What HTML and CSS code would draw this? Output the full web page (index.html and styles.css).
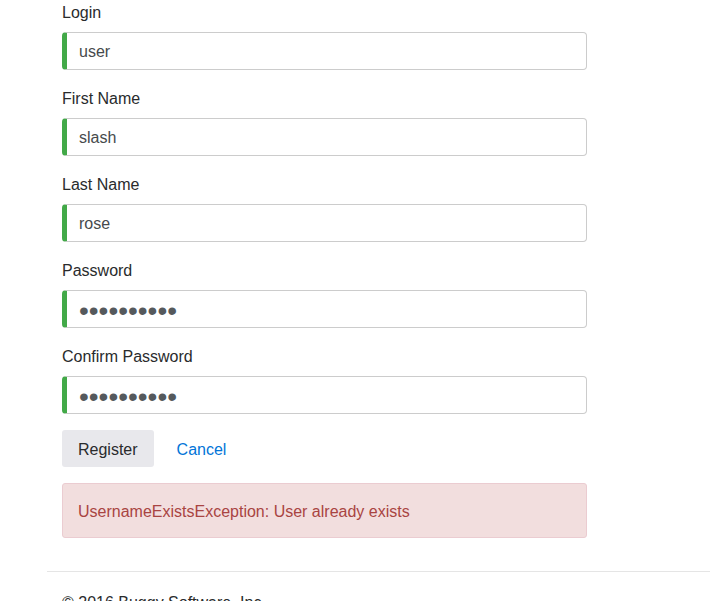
FILE: index.html
```html
<!DOCTYPE html>
<html>
<head>
<meta charset="utf-8">
<link rel="stylesheet" href="styles.css">
</head>
<body>
<div class="page">
  <form class="form">
    <div class="group">
      <label class="label">Login</label>
      <input class="field" type="text" value="user">
    </div>
    <div class="group">
      <label class="label">First Name</label>
      <input class="field" type="text" value="slash">
    </div>
    <div class="group">
      <label class="label">Last Name</label>
      <input class="field" type="text" value="rose">
    </div>
    <div class="group">
      <label class="label">Password</label>
      <input class="field secret" type="password" value="1234567890">
    </div>
    <div class="group">
      <label class="label">Confirm Password</label>
      <input class="field secret" type="password" value="1234567890">
    </div>
    <div class="actions">
      <button class="btn" type="button">Register</button>
      <a class="link" href="#">Cancel</a>
    </div>
    <div class="alert">UsernameExistsException: User already exists</div>
  </form>
  <footer class="footer">
    <p class="copy">© 2016 Buggy Software, Inc.</p>
  </footer>
</div>
</body>
</html>
```

FILE: styles.css
```css
html, body {
  margin: 0;
  padding: 0;
  background: #fff;
  overflow: hidden;
}
body {
  font-family: "Liberation Sans", Arial, sans-serif;
  font-size: 16px;
  line-height: 22px;
  color: #292b2c;
}
.page {
  margin-left: 47px;
  padding-top: 2px;
}
.form {
  width: 525px;
  margin-left: 15px;
}
.group {
  display: flex;
  flex-direction: column;
  margin-bottom: 18px;
}
.label {
  display: block;
  margin-bottom: 8px;
}
.field {
  box-sizing: border-box;
  height: 38px;
  width: 100%;
  margin: 0;
  padding: 2px 12px 0 12px;
  border: 1px solid #cccccc;
  border-left: 5px solid #42a948;
  border-radius: 4px;
  font-family: "Liberation Sans", Arial, sans-serif;
  font-size: 16px;
  color: #464a4c;
  background: #fff;
  outline: none;
}
.secret {
  font-size: 28px;
  padding: 3px 12px 0 12px;
  color: #55595c;
}
.actions {
  display: flex;
  align-items: center;
  gap: 22px;
  margin-top: -2px;
}
.btn {
  height: 37px;
  padding: 2px 16px 0 16px;
  border: 0;
  border-radius: 3px;
  background: #e8e8ec;
  color: #292b2c;
  font-family: "Liberation Sans", Arial, sans-serif;
  font-size: 16px;
}
.link {
  color: #0275d8;
  text-decoration: none;
  padding-top: 2px;
  margin-left: 1px;
}
.alert {
  box-sizing: border-box;
  margin-top: 16px;
  height: 55px;
  padding: 17px 15px 15px 15px;
  border: 1px solid #ebccd1;
  border-radius: 3px;
  background: #f2dede;
  color: #a94442;
}
.footer {
  margin-top: 33px;
  border-top: 1px solid #e5e5e5;
  padding-left: 15px;
}
.copy {
  margin: 20px 0 0 0;
}
```
